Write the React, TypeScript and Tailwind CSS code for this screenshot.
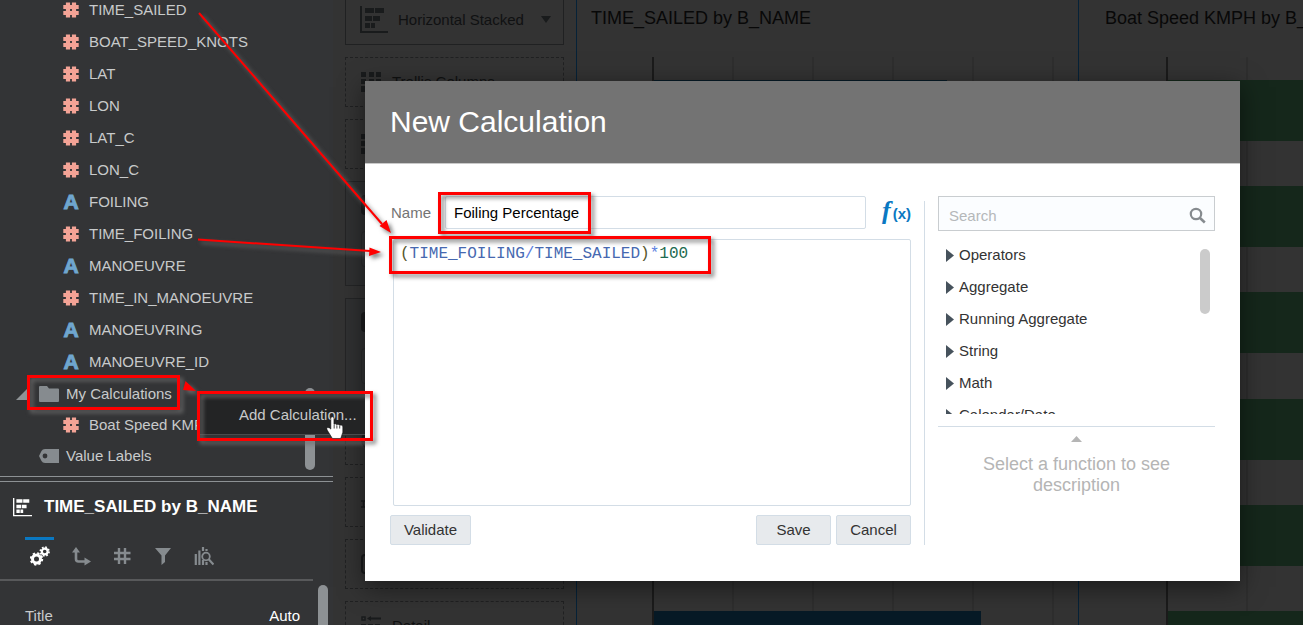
import { useState, type ReactNode } from "react";

type FieldKind = "measure" | "attribute";

const FIELDS: { name: string; kind: FieldKind }[] = [
  { name: "TIME_SAILED", kind: "measure" },
  { name: "BOAT_SPEED_KNOTS", kind: "measure" },
  { name: "LAT", kind: "measure" },
  { name: "LON", kind: "measure" },
  { name: "LAT_C", kind: "measure" },
  { name: "LON_C", kind: "measure" },
  { name: "FOILING", kind: "attribute" },
  { name: "TIME_FOILING", kind: "measure" },
  { name: "MANOEUVRE", kind: "attribute" },
  { name: "TIME_IN_MANOEUVRE", kind: "measure" },
  { name: "MANOEUVRING", kind: "attribute" },
  { name: "MANOEUVRE_ID", kind: "attribute" },
];

const FUNCTIONS = ["Operators", "Aggregate", "Running Aggregate", "String", "Math", "Calendar/Date"];

function HashIcon() {
  return (
    <svg width="16" height="16" viewBox="0 0 16 16" className="shrink-0 text-[#f4a396]" aria-hidden="true">
      <path d="M5 0.5V15.5M11 0.5V15.5M0.3 5H15.7M0.3 11H15.7" stroke="currentColor" strokeWidth="4.200" fill="none" />
    </svg>
  );
}

function FieldIcon({ kind }: { kind: FieldKind }) {
  if (kind === "measure") return <HashIcon />;
  return (
    <span
      className="w-4 shrink-0 text-center text-[21px] leading-4 font-bold text-[#6fa6cf] [-webkit-text-stroke:1px_#6fa6cf]"
      aria-hidden="true"
    >
      A
    </span>
  );
}

function StackedIcon({ className }: { className: string }) {
  return (
    <svg viewBox="0 0 28 28" className={className} fill="currentColor" aria-hidden="true">
      <path d="M0 0h2v25h26v2H0zM5 2h9v5H5zM15 2h9v5h-9zM5 10h7v5H5zM13 10h7v5h-7zM5 17h5v5H5zM11 17h4v5h-4z" />
    </svg>
  );
}

function FieldTree() {
  return (
    <div className="flex min-h-0 flex-1 overflow-hidden">
      <ul className="flex min-w-0 flex-1 flex-col justify-end pb-1">
        {FIELDS.map((f) => (
          <li key={f.name} className="flex h-8 shrink-0 items-center gap-2.5 pl-[63px]">
            <FieldIcon kind={f.kind} />
            <span>{f.name}</span>
          </li>
        ))}
        <li className="flex h-8 shrink-0 items-center pl-4">
          <svg width="11" height="11" viewBox="0 0 11 11" className="mr-3 fill-[#8f9396]" aria-hidden="true">
            <path d="M11 0V11H0z" />
          </svg>
          <svg width="20" height="16" viewBox="0 0 20 16" className="mr-[7px] fill-[#868b8f]" aria-hidden="true">
            <path d="M0 1q0-1 1-1h7l2 2.500h9q1 0 1 1V15q0 1-1 1H1q-1 0-1-1z" />
          </svg>
          <span>My Calculations</span>
        </li>
        <li className="flex h-[30px] shrink-0 items-center gap-2.5 pl-[63px]">
          <HashIcon />
          <span>Boat Speed KMPH</span>
        </li>
        <li className="flex h-8 shrink-0 items-center gap-[7px] pl-[39px]">
          <svg width="20" height="14" viewBox="0 0 20 14" aria-hidden="true">
            <path d="M0 7L2.500 2Q3.500 0 6 0H20V14H6Q3.500 14 2.500 12z" fill="#868b8f" />
            <circle cx="6" cy="7" r="2.400" fill="#333436" />
          </svg>
          <span>Value Labels</span>
        </li>
      </ul>
      <div className="mr-[18px] mb-1.5 h-[82px] w-2.5 self-end rounded-full bg-[#8d9194]" />
    </div>
  );
}

const TABS: { label: string; icon: ReactNode }[] = [
  {
    label: "General",
    icon: (
      <g fill="none" stroke="currentColor">
        <circle cx="6.500" cy="13" r="4" strokeWidth="3" />
        <circle cx="6.500" cy="13" r="5.700" strokeWidth="2" strokeDasharray="2.240 2.240" />
        <circle cx="14.700" cy="5.500" r="2.900" strokeWidth="2.200" />
        <circle cx="14.700" cy="5.500" r="4.300" strokeWidth="1.800" strokeDasharray="1.690 1.690" />
      </g>
    ),
  },
  {
    label: "Axis",
    icon: (
      <g>
        <path d="M5 4V13Q5 15.500 7.500 15.500H15" fill="none" stroke="currentColor" strokeWidth="2.600" />
        <path d="M1 6.500L5 1L9 6.500zM13.500 11.500L20 15.500L13.500 19.500z" fill="currentColor" />
      </g>
    ),
  },
  {
    label: "Values",
    icon: <path d="M7 2V18M13 2V18M2 7H18.500M2 13H18.500" fill="none" stroke="currentColor" strokeWidth="2.400" />,
  },
  { label: "Filters", icon: <path d="M2 2H18L12 9.500V16L8.500 19V9.500z" fill="currentColor" /> },
  {
    label: "Analytics",
    icon: (
      <g fill="none" stroke="currentColor" strokeWidth="2.200">
        <path d="M1.800 8V19M5.400 4.500V19M9 1V5M9 14V19M12.500 3V5M12.500 16V19" />
        <circle cx="12" cy="10.500" r="3.800" strokeWidth="1.800" />
        <path d="M14.700 13.200L19.500 18.500" />
      </g>
    ),
  },
];

function PropertiesPanel() {
  return (
    <section className="h-[149px] shrink-0 overflow-hidden">
      <div className="h-1.5 border-y border-[#8d9194]" />
      <h2 className="mt-[11px] flex h-7 items-center pl-[13px] text-[17px] font-bold text-white">
        <StackedIcon className="mr-3 size-[19px]" />
        TIME_SAILED by B_NAME
      </h2>
      <div className="mt-4 mr-5 flex h-11 gap-3 border-b-2 border-[#58595b] pl-[25px]">
        {TABS.map((t, i) => (
          <button
            key={t.label}
            aria-label={t.label}
            className={
              i === 0
                ? "flex w-[29px] justify-center border-t-[3px] border-[#0a78c2] pt-1.5 text-white"
                : "flex w-[29px] justify-center pt-[9px] text-[#868b8f]"
            }
          >
            <svg width="20" height="20" viewBox="0 0 20 20" aria-hidden="true">
              {t.icon}
            </svg>
          </button>
        ))}
      </div>
      <div className="flex items-start">
        <div className="flex flex-1 justify-between pt-[25px] pl-[25px]">
          <span>Title</span>
          <span className="text-white">Auto</span>
        </div>
        <div className="mt-1 mr-[5px] ml-[18px] h-12 w-2.5 rounded-full bg-[#8d9194]" />
      </div>
    </section>
  );
}

function GridGlyph() {
  return (
    <svg width="21" height="21" viewBox="0 0 21 21" className="shrink-0 fill-[#191b1c]" aria-hidden="true">
      <path d="M0 0h5v5H0zM8 0h5v5H8zM15 0h5v5h-5zM0 7h5v5H0zM8 7h5v5H8zM15 7h5v5h-5zM0 14h5v6H0zM8 14h5v6H8zM15 14h5v6h-5z" />
    </svg>
  );
}

function DropZone({ icon, label }: { icon: ReactNode; label?: string }) {
  return (
    <div className="flex h-[50px] shrink-0 items-center gap-2.5 border border-dashed border-[#202122] pl-[15px]">
      {icon}
      {label && <span>{label}</span>}
    </div>
  );
}

function DropGroup() {
  return (
    <div className="flex h-[105px] shrink-0 flex-col gap-4 border border-[#242526] bg-[#303132] pt-[13px] pl-[15px]">
      <span className="size-5 rounded-sm bg-[#1c1d1e]" />
      <div className="mr-3 h-9 rounded border border-[#2a2b2c] bg-[#323334]" />
    </div>
  );
}

function GrammarPanel() {
  return (
    <section className="mx-3 flex w-[219px] shrink-0 flex-col gap-3 overflow-hidden text-[#101112]">
      <button className="flex h-[45px] shrink-0 items-center border border-t-0 border-[#202122] pb-[5px] pl-3.5 text-left text-[15px]">
        <StackedIcon className="mr-2.5 size-7 shrink-0 text-[#191b1c]" />
        <span className="flex-1">Horizontal Stacked</span>
        <svg width="10" height="7" viewBox="0 0 10 7" className="mr-3 fill-[#191b1c]" aria-hidden="true">
          <path d="M0 0H10L5 7z" />
        </svg>
      </button>
      <DropZone icon={<GridGlyph />} label="Trellis Columns" />
      <DropZone icon={<GridGlyph />} />
      <DropGroup />
      <DropGroup />
      <DropZone icon={<span className="size-5 rounded-full bg-[#1c1d1e]" />} />
      <DropZone
        icon={
          <svg width="20" height="20" viewBox="0 0 20 20" className="mt-3" aria-hidden="true">
            <path d="M0 3H5M2.500 3V9M0 9H5" fill="none" stroke="#191b1c" strokeWidth="1.500" />
          </svg>
        }
      />
      <DropZone icon={<span className="size-5 rounded border-2 border-[#191b1c]" />} />
      <DropZone
        icon={
          <svg width="21" height="21" viewBox="0 0 21 21" className="shrink-0" aria-hidden="true">
            <path d="M1 1h3v3H1z" fill="none" stroke="#191b1c" strokeWidth="1.500" />
            <path
              d="M6 2.500L10 0v1.500h10v2H10V5zM0 8h5v5H0zM7 8h5v5H7zM14 8h5v5h-5zM0 15h5v5H0zM7 15h5v5H7zM14 15h5v5h-5z"
              fill="#191b1c"
            />
          </svg>
        }
        label="Detail"
      />
    </section>
  );
}

const BAR_TOPS = [0, 106, 212, 319, 425, 531];

function Chart({ title, bars, fill, className }: { title: string; bars: number[]; fill: string; className: string }) {
  return (
    <section className={className}>
      <h3 className="overflow-hidden pt-1 text-[18px] leading-7 whitespace-nowrap text-[#080808]">{title}</h3>
      <svg className="mt-[25px] ml-[61px] block h-[568px] w-[calc(100%-61px)] overflow-hidden" aria-hidden="true">
        {[80, 160, 240, 320, 400].map((x) => (
          <rect key={x} x={x} y="0" width="2" height="568" fill="#2e2e2e" />
        ))}
        <rect x="0" y="0" width="2" height="568" fill="#1b1b1b" />
        {bars.map((w, i) => (
          <rect key={i} x="2" y={BAR_TOPS[i] + 23} width={w} height="61" fill={fill} />
        ))}
      </svg>
    </section>
  );
}

function NewCalculationDialog() {
  const [name, setName] = useState("Foiling Percentage");
  const [formula, setFormula] = useState("(TIME_FOILING/TIME_SAILED)*100");
  const tokens = formula.match(/[A-Z_]+|\d+|\s+|./gi) ?? [];
  const tint = (t: string) => {
    if (/^\d/.test(t)) return "text-[#1d6b4f]";
    if (/^[A-Z_]/i.test(t)) return "text-[#4668b0]";
    if (/^[*/+-]/.test(t)) return "text-[#5b7fe0]";
    return "text-[#55552a]";
  };
  const button =
    "h-[30px] rounded-xs border border-[#d3dde6] bg-[#e7eaed] text-[15px] text-[#333] hover:bg-[#dde2e6]";

  return (
    <div
      role="dialog"
      aria-label="New Calculation"
      className="flex min-w-0 flex-1 flex-col bg-white shadow-[0_6px_24px_rgba(0,0,0,0.5)]"
    >
      <header className="flex h-[83px] shrink-0 items-center border-b border-[#c9c9c9] bg-[#737373] pl-[25px]">
        <h1 className="text-[30px] text-white">New Calculation</h1>
      </header>
      <div className="flex min-h-0 flex-1 pt-8 pr-[25px] pb-9 pl-[25px]">
        <div className="flex min-w-0 flex-1 flex-col">
          <div className="flex h-[33px] items-center">
            <label htmlFor="calc-name" className="w-[55px] pl-px text-[#737373]">
              Name
            </label>
            <input
              id="calc-name"
              value={name}
              onChange={(e) => setName(e.target.value)}
              className="h-full min-w-0 flex-1 rounded-xs border border-[#d3dde6] px-2 text-black outline-none"
            />
            <button
              aria-label="Insert function"
              className="flex w-[45px] items-baseline justify-end text-[#0a78c2]"
            >
              <span className="font-['Liberation_Serif',serif] text-[26px] leading-6 font-bold italic">f</span>
              <span className="pl-0.5 text-[15px] leading-6 font-bold">(x)</span>
            </button>
          </div>
          <div className="relative mt-2.5 ml-[3px] flex min-h-0 flex-1 rounded-xs border border-[#d3dde6] font-['Liberation_Mono',monospace] text-[16px] leading-5">
            <pre className="pointer-events-none absolute inset-0 overflow-hidden px-1.5 py-1 font-[inherit]" aria-hidden="true">
              {tokens.map((t, i) => (
                <span key={i} className={tint(t)}>
                  {t}
                </span>
              ))}
            </pre>
            <textarea
              aria-label="Formula"
              spellCheck={false}
              value={formula}
              onChange={(e) => setFormula(e.target.value)}
              className="flex-1 resize-none bg-transparent px-1.5 py-1 text-transparent caret-black outline-none"
            />
          </div>
          <div className="mt-[9px] flex gap-[5px]">
            <button className={`${button} mr-auto w-[81px]`}>Validate</button>
            <button className={`${button} w-[75px]`}>Save</button>
            <button className={`${button} w-[75px]`}>Cancel</button>
          </div>
        </div>
        <div className="mt-[5px] mr-[13px] ml-[13px] w-px bg-[#d3dde6]" />
        <div className="w-[277px] shrink-0">
          <div className="flex h-[35px] items-center border border-[#c9cdd0] bg-[#fbfdff] pr-2 pl-2.5">
            <input
              type="search"
              aria-label="Search"
              placeholder="Search"
              className="h-full min-w-0 flex-1 bg-transparent pt-1 outline-none placeholder:text-[#b5b8ba]"
            />
            <svg width="17" height="17" viewBox="0 0 17 17" className="mt-1" fill="none" stroke="#868b8f" aria-hidden="true">
              <circle cx="7" cy="7" r="5.200" strokeWidth="2.200" />
              <path d="M11 11L15.800 15.500" strokeWidth="2.600" />
            </svg>
          </div>
          <div className="flex h-[183px] overflow-hidden">
            <ul className="flex-1 pt-2 pl-2">
              {FUNCTIONS.map((f) => (
                <li key={f}>
                  <button className="flex h-8 items-center gap-[5px] text-[#333]">
                    <svg width="8" height="13" viewBox="0 0 8 13" className="fill-[#46525c]" aria-hidden="true">
                      <path d="M0 0L8 6.500L0 13z" />
                    </svg>
                    {f}
                  </button>
                </li>
              ))}
            </ul>
            <div className="mt-[18px] mr-[5px] h-[65px] w-2.5 rounded-full bg-[#cbcbcb]" />
          </div>
          <div className="mt-3 flex flex-col items-center border-t border-[#d3dde6] pt-[9px]">
            <svg width="11" height="6" viewBox="0 0 11 6" className="fill-[#b5b5b5]" aria-hidden="true">
              <path d="M5.500 0L11 6H0z" />
            </svg>
            <p className="mt-3 w-[200px] text-center text-[18px] leading-[21px] text-[#b5b5b5]">
              Select a function to see description
            </p>
          </div>
        </div>
      </div>
    </div>
  );
}

function Annotations() {
  return (
    <svg
      className="pointer-events-none absolute inset-0 size-full drop-shadow-[3px_3px_2px_rgba(110,110,110,0.9)]"
      fill="none"
      stroke="#ff0000"
      aria-hidden="true"
    >
      <g strokeWidth="3">
        <rect x="439.500" y="193.500" width="150" height="39" />
        <rect x="390.500" y="237.500" width="319" height="35" />
        <rect x="28.500" y="376.500" width="150" height="32" />
        <rect x="198.500" y="392.500" width="173" height="47" />
      </g>
      <path d="M199 13L382 224M198 239.500L370 251" strokeWidth="2" />
      <path
        d="M391 233L379.500 226L386.500 220zM381 252L369 256L369.500 247.500zM196 391L183 390L185.500 381z"
        fill="#ff0000"
        stroke="none"
      />
    </svg>
  );
}

export default function App() {
  return (
    <main className="relative flex h-screen overflow-hidden bg-[#333333] font-['Liberation_Sans',Arial,sans-serif] text-[15px] leading-5 text-[#c8cacb]">
      <aside className="flex w-[333px] shrink-0 flex-col bg-[#333436]">
        <FieldTree />
        <PropertiesPanel />
      </aside>
      <GrammarPanel />
      <Chart
        title="TIME_SAILED by B_NAME"
        bars={[293, 300, 306, 312, 320, 327]}
        fill="#071a26"
        className="min-w-0 flex-1 border-l border-[#062238] pl-[14px]"
      />
      <Chart
        title="Boat Speed KMPH by B_NAME"
        bars={[400, 400, 400, 400, 400, 400]}
        fill="#15271b"
        className="w-[225px] shrink-0 border-l border-[#062238] pl-[26px]"
      />
      <div className="absolute inset-0 flex pt-[81px] pr-[63px] pb-11 pl-[365px]">
        <NewCalculationDialog />
      </div>
      <div role="menu" className="absolute top-[394px] left-[200px] w-[165px] border-b border-[#4a4b4d] bg-[#232425]">
        <button role="menuitem" className="h-10 w-full pt-0.5 pl-[39px] text-left whitespace-nowrap">
          Add Calculation...
        </button>
      </div>
      <Annotations />
      <svg width="18" height="23" viewBox="0 0 17 22" className="absolute top-[416px] left-[326px]" aria-hidden="true">
        <path
          d="M4.500 1.500Q6 0 7.500 1.500V8Q9 6.800 10 8.300Q11.500 7.300 12.800 8.900Q14.800 8 16 10V15.500L14 21.500H6L1 13.500Q0 11.800 1.500 11Q3 10.700 4.500 12.500z"
          fill="white"
          stroke="#111"
          strokeWidth="0.600"
        />
        <path d="M7.700 8.500V12M10.300 9V12M13 9.500V12" stroke="#222" strokeWidth="0.800" />
      </svg>
    </main>
  );
}
